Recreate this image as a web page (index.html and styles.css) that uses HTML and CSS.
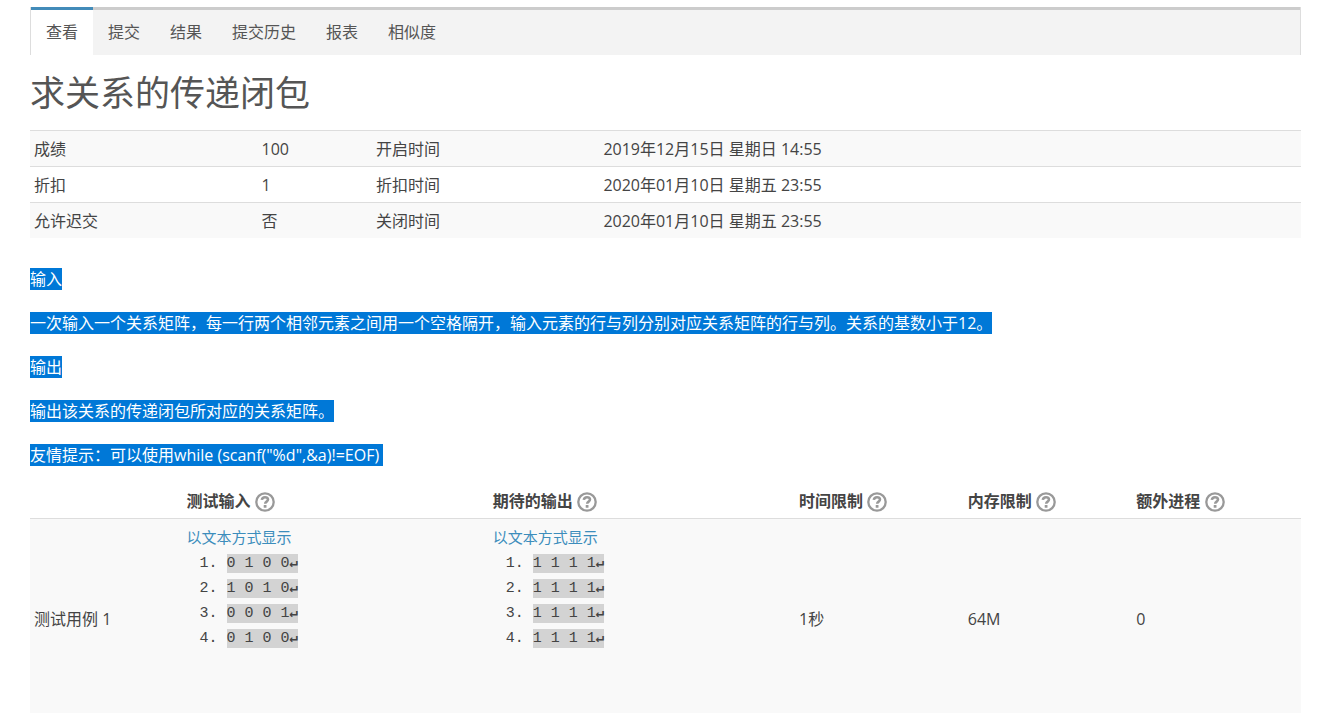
FILE: index.html
```html
<!DOCTYPE html>
<html lang="zh-CN">
<head>
    <meta charset="UTF-8">
    <meta name="viewport" content="width=device-width, initial-scale=1.0">
    <title>求关系的传递闭包</title>
    <link rel="stylesheet" href="styles.css">
</head>
<body>
    <svg class="sprite" aria-hidden="true">
        <symbol id="icon-help" viewBox="0 0 20 20">
            <circle cx="10" cy="10" r="8.7" fill="none" stroke="currentColor" stroke-width="2.3"/>
            <path d="M6.8 7.9C7.1 5.9 8.4 5.2 10 5.2c1.8 0 3 .9 3 2.4 0 2-2.8 2-2.8 4.1" fill="none" stroke="currentColor" stroke-width="2.6"/>
            <rect x="8.7" y="13" width="2.8" height="2.7" rx="0.5" fill="currentColor"/>
        </symbol>
    </svg>

    <nav class="tabs">
        <a href="#" class="tab active">查看</a>
        <a href="#" class="tab">提交</a>
        <a href="#" class="tab">结果</a>
        <a href="#" class="tab">提交历史</a>
        <a href="#" class="tab">报表</a>
        <a href="#" class="tab">相似度</a>
    </nav>

    <main>
        <h1>求关系的传递闭包</h1>

        <table class="info">
            <tr>
                <td class="label">成绩</td>
                <td class="value">100</td>
                <td class="label">开启时间</td>
                <td>2019年12月15日 星期日 14:55</td>
            </tr>
            <tr>
                <td>折扣</td>
                <td>1</td>
                <td>折扣时间</td>
                <td>2020年01月10日 星期五 23:55</td>
            </tr>
            <tr>
                <td>允许迟交</td>
                <td>否</td>
                <td>关闭时间</td>
                <td>2020年01月10日 星期五 23:55</td>
            </tr>
        </table>

        <div class="description">
            <p><span class="selected">输入</span></p>
            <p><span class="selected">一次输入一个关系矩阵，每一行两个相邻元素之间用一个空格隔开，输入元素的行与列分别对应关系矩阵的行与列。关系的基数小于12。</span></p>
            <p><span class="selected">输出</span></p>
            <p><span class="selected">输出该关系的传递闭包所对应的关系矩阵。</span></p>
            <p><span class="selected line-end">友情提示：可以使用while (scanf("%d",&amp;a)!=EOF)</span></p>
        </div>

        <table class="cases">
            <thead>
                <tr>
                    <th class="case-name"></th>
                    <th class="case-data">测试输入 <a href="#" class="help" aria-label="测试输入"><svg><use href="#icon-help"/></svg></a></th>
                    <th class="case-data">期待的输出 <a href="#" class="help" aria-label="期待的输出"><svg><use href="#icon-help"/></svg></a></th>
                    <th>时间限制 <a href="#" class="help" aria-label="时间限制"><svg><use href="#icon-help"/></svg></a></th>
                    <th>内存限制 <a href="#" class="help" aria-label="内存限制"><svg><use href="#icon-help"/></svg></a></th>
                    <th>额外进程 <a href="#" class="help" aria-label="额外进程"><svg><use href="#icon-help"/></svg></a></th>
                </tr>
            </thead>
            <tbody>
                <tr>
                    <td>测试用例 1</td>
                    <td>
                        <a href="#" class="text-link">以文本方式显示</a>
                        <ol class="code">
                            <li><span>0 1 0 0<b>↵</b></span></li>
                            <li><span>1 0 1 0<b>↵</b></span></li>
                            <li><span>0 0 0 1<b>↵</b></span></li>
                            <li><span>0 1 0 0<b>↵</b></span></li>
                        </ol>
                    </td>
                    <td>
                        <a href="#" class="text-link">以文本方式显示</a>
                        <ol class="code">
                            <li><span>1 1 1 1<b>↵</b></span></li>
                            <li><span>1 1 1 1<b>↵</b></span></li>
                            <li><span>1 1 1 1<b>↵</b></span></li>
                            <li><span>1 1 1 1<b>↵</b></span></li>
                        </ol>
                    </td>
                    <td>1秒</td>
                    <td>64M</td>
                    <td>0</td>
                </tr>
            </tbody>
        </table>
    </main>
</body>
</html>
```
FILE: styles.css
```css
body {
    font-family: "Open Sans", "Noto Sans CJK SC", sans-serif;
    font-size: 16px;
    line-height: 24px;
    margin: 0;
    padding: 7px 33px 0 30px;
    background: #fff;
    color: #444;
}
a {
    color: #3c8dbc;
    text-decoration: none;
}
.sprite {
    display: none;
}
.tabs {
    display: flex;
    background: #f3f3f3;
    border-left: 1px solid #ddd;
    border-right: 1px solid #ddd;
    box-shadow: inset 0 3px #ccc;
}
.tab {
    padding: 10px 15px 11px;
    border-top: 3px solid transparent;
    color: #555;
}
.tab.active {
    background: #fff;
    border-top-color: #428bb9;
}
h1 {
    margin: 14px 0 13px;
    font-size: 35px;
    font-weight: normal;
    line-height: 48px;
    color: #555;
}
table {
    width: 100%;
    table-layout: fixed;
    border-collapse: separate;
    border-spacing: 0;
}
th,
td {
    padding: 6px 4px 5px;
    text-align: left;
}
td {
    border-top: 1px solid #ddd;
}
.info tr:nth-child(odd),
.cases tbody tr {
    background: #f9f9f9;
}
.info .label {
    width: 17.9%;
    box-sizing: border-box;
}
.info .value {
    width: 9%;
    box-sizing: border-box;
}
.description {
    padding: 29px 0 19px;
}
.description p {
    margin: 0 0 20px;
}
.description p:last-child {
    margin-bottom: 0;
}
.selected {
    background: #0078d7;
    color: #fff;
}
.selected.line-end {
    padding-right: 4px;
}
.case-name {
    width: 12%;
    box-sizing: border-box;
}
.case-data {
    width: 24.1%;
    box-sizing: border-box;
}
.cases th {
    padding: 3px 4px 5px;
}
.help {
    color: #999;
}
.help svg {
    width: 20px;
    height: 20px;
    vertical-align: -5px;
}
.text-link {
    font-size: 15px;
}
.code {
    margin: 2px 0 0;
    padding: 0 0 62px 40px;
    font-family: "Liberation Mono", monospace;
    font-size: 15px;
    line-height: 25px;
}
.code span {
    padding: 1px 0;
    background: #d3d3d3;
}
.code b {
    font-family: "DejaVu Sans Mono", monospace;
    font-size: 14px;
    line-height: 1;
}
```
